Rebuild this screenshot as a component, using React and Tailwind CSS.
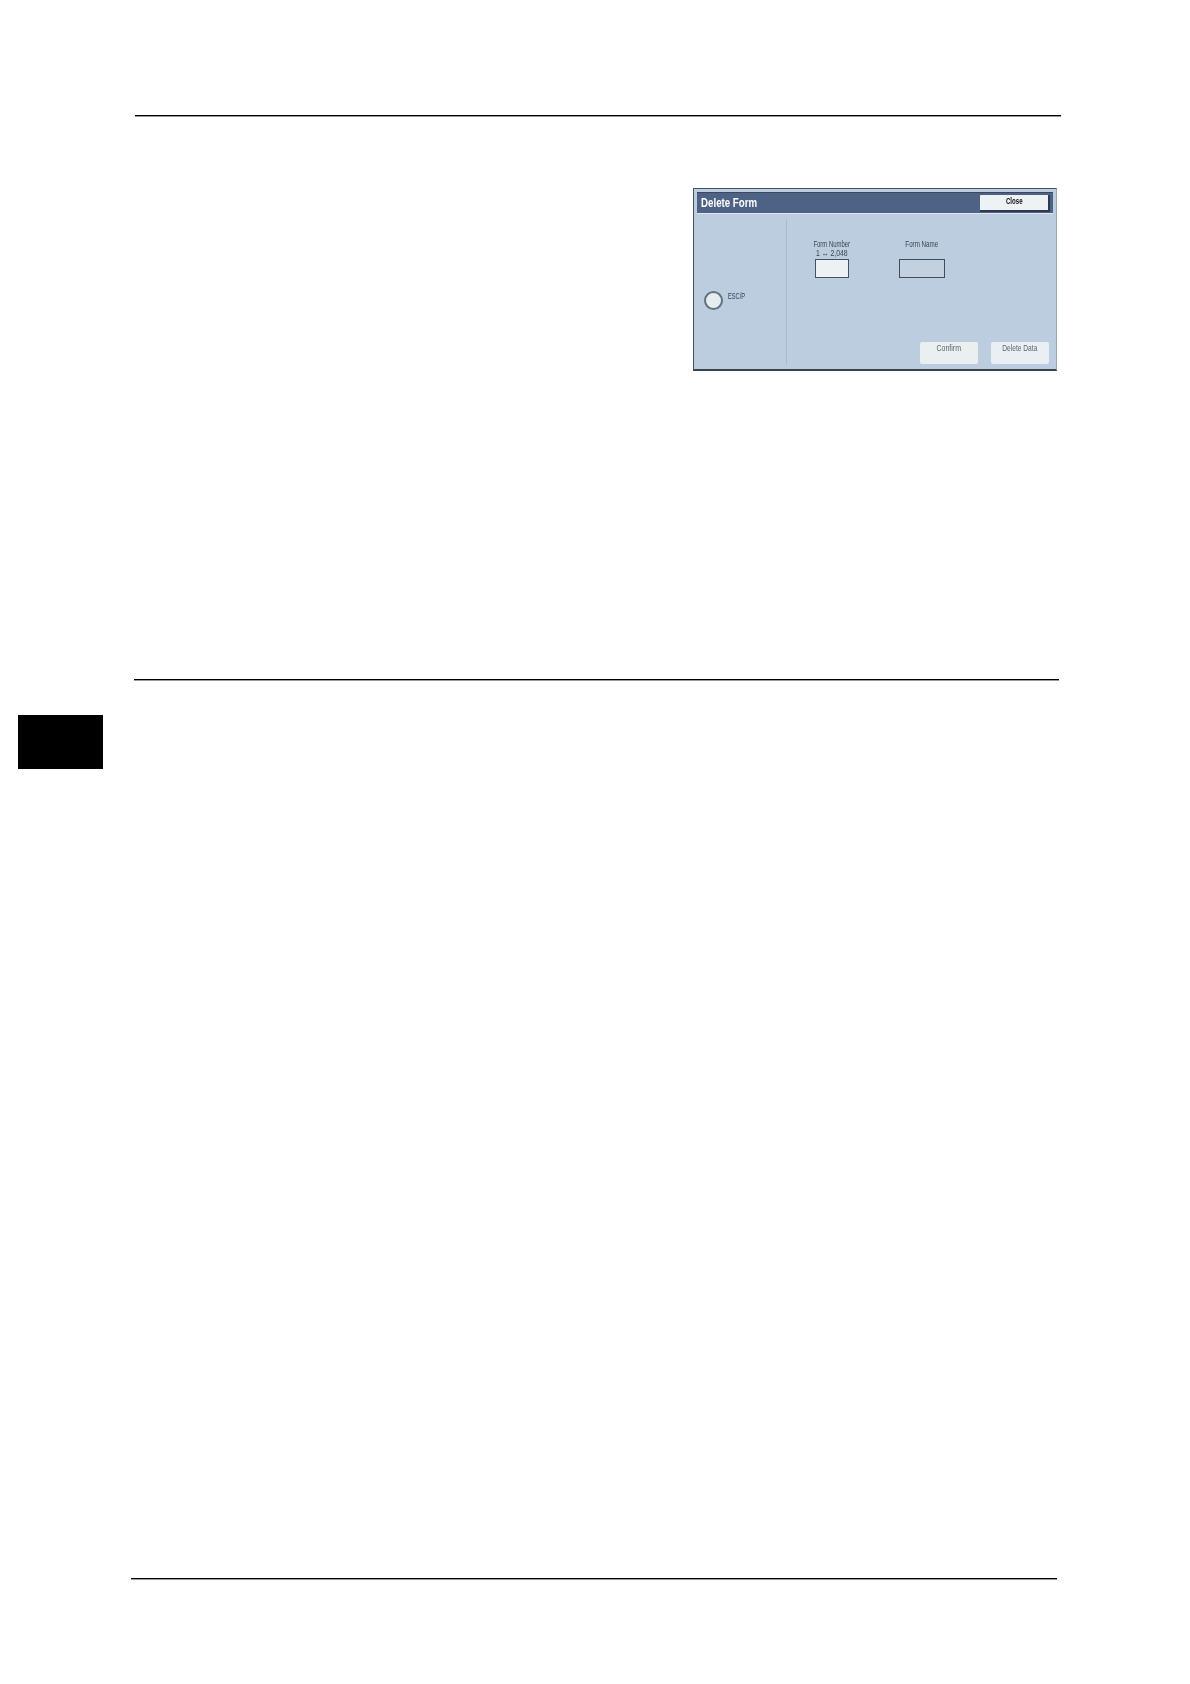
export default function App() {
  const font = "font-['Liberation_Sans',Arial,sans-serif]";
  return (
    <div className={`w-[1190px] h-[1684px] bg-white flex flex-col relative ${font}`}>
      <div className="mt-[115px] ml-[135px] w-[926px] h-px bg-black shadow-[0_1px_0_#999]" />
      <div className="mt-[72px] ml-[693px] w-[364px] h-[183px] flex flex-col bg-[#bccde0] border-t border-l border-[#46525f] border-b-2 border-b-[#39424d] border-r border-r-[#9aa6b4] blur-[0.35px]">
        <div className="mt-[3px] mx-[3px] h-[22px] shrink-0 flex items-center justify-between bg-[#4e6285] border-b border-b-[#dfe8f2] border-t border-t-[#39475f] pl-[4px] pr-[3px]">
          <span className="inline-block origin-left scale-x-[0.81] text-[12px] font-bold text-white whitespace-nowrap">Delete Form</span>
          <div className="w-[70px] h-[17px] bg-[#eef2f5] border-r-2 border-b-2 border-[#2e3a50] rounded-[1px] flex items-center justify-center pl-[1px]">
            <span className="inline-block scale-x-[0.68] text-[9px] font-bold text-[#111]">Close</span>
          </div>
        </div>
        <div className="flex-1 flex min-h-0 pt-[5px] pb-[5px]">
          <div className="w-[93px] shrink-0 border-r border-r-[#a9bacd] pl-[10px] pt-[72px] flex items-start gap-[5px]">
            <div className="w-[19px] h-[19px] rounded-full bg-[#e6edf1] border-2 border-[#66717e] shrink-0" />
            <span className="inline-block origin-left scale-x-[0.63] text-[9px] leading-none mt-[1px] text-[#333d4a]">ESC/P</span>
          </div>
          <div className="flex-1 flex flex-col justify-between pl-[27px] pr-[7px]">
            <div className="flex items-end gap-[50px] pt-[21px]">
              <div className="w-[35px] flex flex-col items-center">
                <span className="inline-block scale-x-[0.66] text-[9px] leading-[9px] whitespace-nowrap text-[#3a4552]">Form Number</span>
                <span className="inline-block scale-x-[0.76] text-[9px] leading-[9px] whitespace-nowrap text-[#3a4552] mb-[1px]">1 ↔ 2,048</span>
                <div className="w-[34px] h-[19px] bg-[#eef1f4] border border-[#45525f]" />
              </div>
              <div className="w-[46px] flex flex-col items-center">
                <span className="inline-block scale-x-[0.69] text-[9px] leading-[9px] whitespace-nowrap text-[#3a4552] mb-[10px]">Form Name</span>
                <div className="w-[46px] h-[19px] bg-[#c2d0e0] border border-[#3f4d5e]" />
              </div>
            </div>
            <div className="flex justify-end gap-[13px]">
              <div className="w-[58px] h-[22px] bg-[#eaeff0] rounded-[2px] flex justify-center items-start pt-[2px]">
                <span className="inline-block scale-x-[0.78] text-[9px] leading-[9px] text-[#5b6672] whitespace-nowrap">Confirm</span>
              </div>
              <div className="w-[58px] h-[22px] bg-[#eaeff3] rounded-[2px] flex justify-center items-start pt-[2px]">
                <span className="inline-block scale-x-[0.74] text-[9px] leading-[9px] text-[#5b6672] whitespace-nowrap">Delete Data</span>
              </div>
            </div>
          </div>
        </div>
      </div>
      <div className="mt-[308px] ml-[134px] w-[925px] h-px bg-black shadow-[0_1px_0_#999]" />
      <div className="mt-[35px] ml-[18px] w-[85px] h-[54px] bg-black" />
      <div className="mt-[809px] ml-[131px] w-[926px] h-px bg-black shadow-[0_1px_0_#999]" />
    </div>
  );
}
